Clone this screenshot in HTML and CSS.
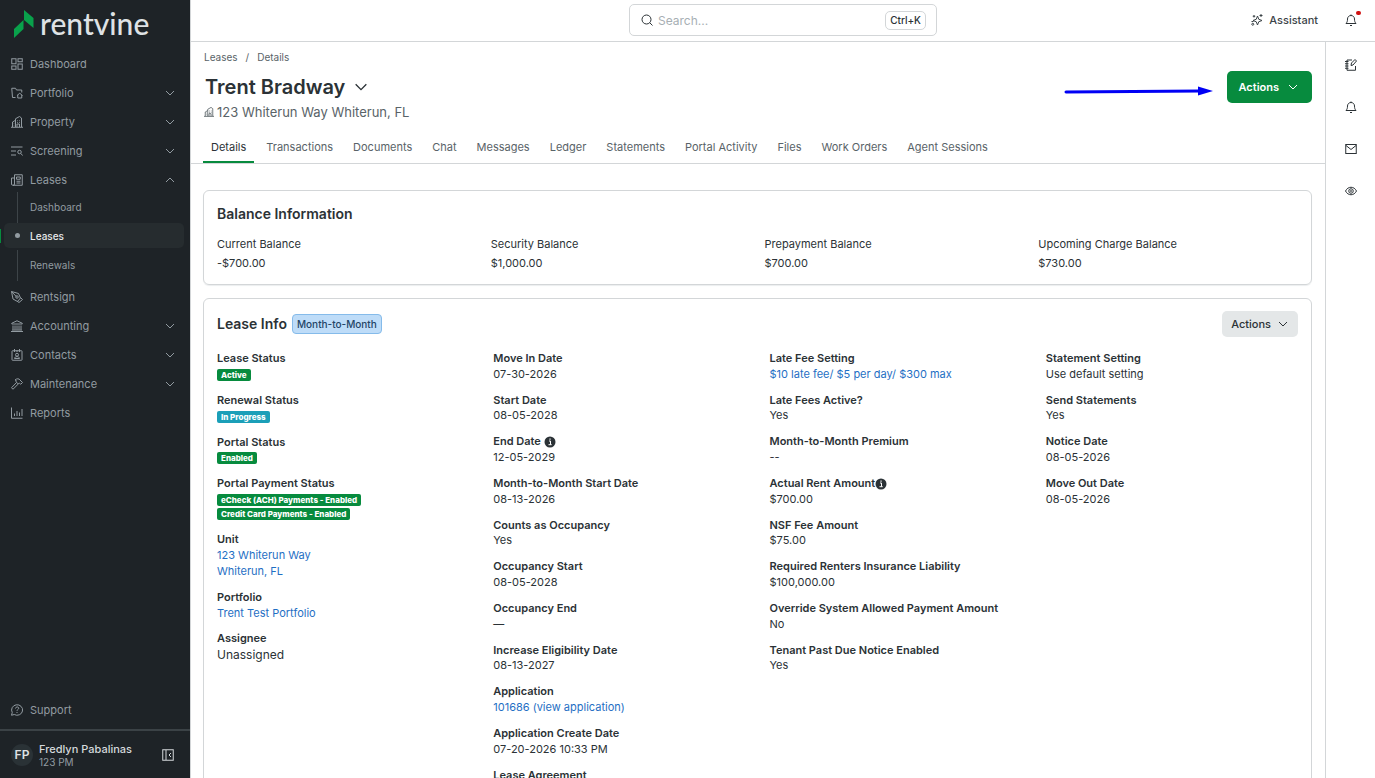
FILE: index.html
```html
<!DOCTYPE html>
<html lang="en">
<head>
<meta charset="utf-8">
<title>Trent Bradway - Lease Details</title>
<link rel="stylesheet" href="styles.css">
</head>
<body>
<svg class="sprite" aria-hidden="true">
  <symbol id="chev" viewBox="0 0 12 12"><path d="M2 4l4 4 4-4"/></symbol>
  <symbol id="building" viewBox="0 0 24 24"><path d="M0 22.500h24M3 22V12l6-3.500M9 22V5.500L17 1l4 3v18M12 22v-6h5v6M12 9.500h1.500M16.500 9.500h1.500M12 13h1.500M16.500 13h1.500M5.500 14.500h1M5.500 18.500h1"/></symbol>
  <symbol id="bell" viewBox="0 0 24 24"><path d="M12 1v2M12 3c-4 0-7 3-7 7 0 5-1 6.500-3 9h20c-2-2.500-3-4-3-9 0-4-3-7-7-7zM10 23h4"/></symbol>
</svg>
<div class="app">
  <aside class="sidebar">
    <a class="logo" href="#" aria-label="rentvine">
      <svg class="logo-mark" viewBox="0 0 20 28" aria-hidden="true"><path d="M10 0l9.500 8v10L10 10z"/><path d="M9.500 10v9L0 28v-9z"/></svg>
      <span>rentvine</span>
    </a>
    <nav class="nav">
      <a class="nav-item" href="#"><svg class="ico" viewBox="0 0 24 24"><rect x="1.500" y="1.500" width="8.500" height="10"/><rect x="14" y="1.500" width="8.500" height="6"/><rect x="1.500" y="16" width="8.500" height="6.500"/><rect x="14" y="12" width="8.500" height="10.500"/></svg><span>Dashboard</span></a>
      <button class="nav-item" type="button"><svg class="ico" viewBox="0 0 24 24"><path d="M9 21H3L1.500 2.500H9l2 3.500h10.500v5M12 17l5.500-4.500L23 17M13.500 16v6h8v-6"/></svg><span>Portfolio</span><svg class="chev"><use href="#chev"/></svg></button>
      <button class="nav-item" type="button"><svg class="ico"><use href="#building"/></svg><span>Property</span><svg class="chev"><use href="#chev"/></svg></button>
      <button class="nav-item" type="button"><svg class="ico" viewBox="0 0 24 24"><path d="M0 4h23M0 12h10M0 20h10"/><circle cx="17" cy="14" r="3.500"/><path d="M20 17l3 4"/></svg><span>Screening</span><svg class="chev"><use href="#chev"/></svg></button>
      <button class="nav-item" type="button" aria-expanded="true"><svg class="ico" viewBox="0 0 24 24"><path d="M7 1.500h15.500v21H3.500a2.500 2.500 0 0 1-2.500-2.500V8h5M7 1.500V20a2.500 2.500 0 0 1-3 2.500M11 6h7.500v4.500H11zM11 14.500h8M11 18h8"/></svg><span>Leases</span><svg class="chev up"><use href="#chev"/></svg></button>
      <div class="subnav">
        <a href="#"><i class="guide"></i>Dashboard</a>
        <a class="current" href="#" aria-current="page"><i class="dot"></i>Leases</a>
        <a href="#"><i class="guide"></i>Renewals</a>
      </div>
      <a class="nav-item" href="#"><svg class="ico" viewBox="0 0 24 24"><path d="M1 1l14 4 4 9-6 7-9-5zM1 1l9.500 10M19 13l4 4-7 6-4-3"/><circle cx="12" cy="12" r="2.500"/></svg><span>Rentsign</span></a>
      <button class="nav-item" type="button"><svg class="ico" viewBox="0 0 24 24"><path d="M1.500 8v-1.500L12 1.500l10.500 5V8zM4 11v8M8 11v8M12 11v8M16 11v8M20 11v8M2 20h20M0 23h24"/></svg><span>Accounting</span><svg class="chev"><use href="#chev"/></svg></button>
      <button class="nav-item" type="button"><svg class="ico" viewBox="0 0 24 24"><rect x="2" y="3.500" width="20" height="19" rx="1"/><path d="M7 0v6M12 2v4M17 0v6M7 19c0-5 10-5 10 0z"/><circle cx="12" cy="11.500" r="3"/></svg><span>Contacts</span><svg class="chev"><use href="#chev"/></svg></button>
      <button class="nav-item" type="button"><svg class="ico" viewBox="0 0 24 24"><path d="M11 9L1 19.500l3 3L14.500 12M8 4c4-3.500 8-3 10 0l5 5-3.500 3.500-3-2.500-2 2-4.500-4.500 1-2z"/></svg><span>Maintenance</span><svg class="chev"><use href="#chev"/></svg></button>
      <a class="nav-item" href="#"><svg class="ico" viewBox="0 0 24 24"><path d="M1 1v21.500h22M7 18v-5M12 18V8M17 18v-7M22 18V4"/></svg><span>Reports</span></a>
    </nav>
    <a class="nav-item support" href="#"><svg class="ico" viewBox="0 0 24 24"><path d="M1 22.500l1.500-5.500a11 10.500 0 1 1 4 4zM9 9c0-4 6.500-4 6.500-.5 0 2.500-3.500 2.500-3.500 5M12 16v2"/></svg><span>Support</span></a>
    <div class="user">
      <span class="avatar">FP</span>
      <div class="who"><strong>Fredlyn Pabalinas</strong><span>123 PM</span></div>
      <button class="icon-btn" type="button" aria-label="Collapse sidebar"><svg class="ico" viewBox="0 0 24 24"><rect x="1.500" y="1.500" width="21" height="21"/><path d="M8 2v20M18 8l-4 4 4 4"/></svg></button>
    </div>
  </aside>

  <div class="page">
    <header class="topbar">
      <label class="search">
        <svg class="ico" viewBox="0 0 24 24"><circle cx="11" cy="11" r="9"/><path d="M17.500 17.500L23 23"/></svg>
        <input type="text" placeholder="Search..." aria-label="Search">
        <kbd>Ctrl+K</kbd>
      </label>
      <div class="top-actions">
        <button class="assistant" type="button"><svg class="ico" viewBox="0 0 24 24"><path d="M13 4l2.500 6.500L22 13l-6.500 2.500L13 22l-2.500-6.500L4 13l6.500-2.500zM6 2v5M3.500 4.500h5M20 0v6M17 3h6M1 15h4"/><circle cx="3.500" cy="20.500" r="2"/></svg>Assistant</button>
        <button class="icon-btn notify" type="button" aria-label="Notifications"><svg class="ico"><use href="#bell"/></svg><i></i></button>
      </div>
    </header>

    <div class="body">
      <main class="main">
        <div class="head">
          <nav class="crumbs" aria-label="Breadcrumb"><a href="#">Leases</a><span>/</span><a href="#">Details</a></nav>
          <div class="head-row">
            <div class="title-block">
              <div class="title"><h1>Trent Bradway</h1><button class="icon-btn" type="button" aria-label="Switch lease"><svg class="title-chev"><use href="#chev"/></svg></button></div>
              <p class="address"><svg class="ico"><use href="#building"/></svg>123 Whiterun Way Whiterun, FL</p>
            </div>
            <div class="head-actions">
              <svg class="arrow" viewBox="0 0 150 12" aria-hidden="true"><path class="line" d="M2 7l134-1"/><path class="tip" d="M134 1.500l15 4.500-15 4.500z"/></svg>
              <button class="primary" type="button">Actions<svg class="chev"><use href="#chev"/></svg></button>
            </div>
          </div>
          <nav class="tabs">
            <a class="active" href="#">Details</a><a href="#">Transactions</a><a href="#">Documents</a><a href="#">Chat</a><a href="#">Messages</a><a href="#">Ledger</a><a href="#">Statements</a><a href="#">Portal Activity</a><a href="#">Files</a><a href="#">Work Orders</a><a href="#">Agent Sessions</a>
          </nav>
        </div>

        <div class="content">
          <section class="card balance">
            <h2>Balance Information</h2>
            <dl class="balances">
              <div><dt>Current Balance</dt><dd>-$700.00</dd></div>
              <div><dt>Security Balance</dt><dd>$1,000.00</dd></div>
              <div><dt>Prepayment Balance</dt><dd>$700.00</dd></div>
              <div><dt>Upcoming Charge Balance</dt><dd>$730.00</dd></div>
            </dl>
          </section>

          <section class="card lease">
            <div class="card-head">
              <h2>Lease Info</h2><span class="pill">Month-to-Month</span>
              <button class="secondary" type="button">Actions<svg class="chev"><use href="#chev"/></svg></button>
            </div>
            <div class="info">
              <dl>
                <div><dt>Lease Status</dt><dd><span class="badge">Active</span></dd></div>
                <div><dt>Renewal Status</dt><dd><span class="badge teal">In Progress</span></dd></div>
                <div><dt>Portal Status</dt><dd><span class="badge">Enabled</span></dd></div>
                <div><dt>Portal Payment Status</dt><dd><span class="badge">eCheck (ACH) Payments - Enabled</span></dd><dd><span class="badge">Credit Card Payments - Enabled</span></dd></div>
                <div><dt>Unit</dt><dd><a href="#">123 Whiterun Way<br>Whiterun, FL</a></dd></div>
                <div><dt>Portfolio</dt><dd><a href="#">Trent Test Portfolio</a></dd></div>
                <div><dt>Assignee</dt><dd class="assignee">Unassigned</dd></div>
              </dl>
              <dl>
                <div><dt>Move In Date</dt><dd>07-30-2026</dd></div>
                <div><dt>Start Date</dt><dd>08-05-2028</dd></div>
                <div><dt>End Date <svg class="info-ico" viewBox="0 0 12 12"><circle cx="6" cy="6" r="5.500"/><path d="M5 5h1.500v3.500M4.500 8.700h3.200M5.300 3.100h1.500"/></svg></dt><dd>12-05-2029</dd></div>
                <div><dt>Month-to-Month Start Date</dt><dd>08-13-2026</dd></div>
                <div><dt>Counts as Occupancy</dt><dd>Yes</dd></div>
                <div><dt>Occupancy Start</dt><dd>08-05-2028</dd></div>
                <div><dt>Occupancy End</dt><dd>—</dd></div>
                <div><dt>Increase Eligibility Date</dt><dd>08-13-2027</dd></div>
                <div><dt>Application</dt><dd><a href="#">101686 (view application)</a></dd></div>
                <div><dt>Application Create Date</dt><dd>07-20-2026 10:33 PM</dd></div>
                <div><dt>Lease Agreement</dt></div>
              </dl>
              <dl>
                <div><dt>Late Fee Setting</dt><dd><a href="#">$10 late fee/ $5 per day/ $300 max</a></dd></div>
                <div><dt>Late Fees Active?</dt><dd>Yes</dd></div>
                <div><dt>Month-to-Month Premium</dt><dd>--</dd></div>
                <div><dt>Actual Rent Amount<svg class="info-ico" viewBox="0 0 12 12"><circle cx="6" cy="6" r="5.500"/><path d="M5 5h1.500v3.500M4.500 8.700h3.200M5.300 3.100h1.500"/></svg></dt><dd>$700.00</dd></div>
                <div><dt>NSF Fee Amount</dt><dd>$75.00</dd></div>
                <div><dt>Required Renters Insurance Liability</dt><dd>$100,000.00</dd></div>
                <div><dt>Override System Allowed Payment Amount</dt><dd>No</dd></div>
                <div><dt>Tenant Past Due Notice Enabled</dt><dd>Yes</dd></div>
              </dl>
              <dl>
                <div><dt>Statement Setting</dt><dd>Use default setting</dd></div>
                <div><dt>Send Statements</dt><dd>Yes</dd></div>
                <div><dt>Notice Date</dt><dd>08-05-2026</dd></div>
                <div><dt>Move Out Date</dt><dd>08-05-2026</dd></div>
              </dl>
            </div>
          </section>
        </div>
      </main>

      <aside class="rail">
        <button class="icon-btn" type="button" aria-label="Notes"><svg class="ico" viewBox="0 0 24 24"><path d="M14 2H4v20.500h17V14M0 5h7M0 9.500h7M0 14h7M0 18.500h7M12 13l1-5 7-7 3 3-7 8z"/></svg></button>
        <button class="icon-btn" type="button" aria-label="Alerts"><svg class="ico"><use href="#bell"/></svg></button>
        <button class="icon-btn" type="button" aria-label="Mail"><svg class="ico" viewBox="0 0 24 24"><rect x="1.500" y="3" width="21" height="18"/><path d="M2 5l10 8 10-8"/></svg></button>
        <button class="icon-btn" type="button" aria-label="Watch"><svg class="ico" viewBox="0 0 24 24"><path d="M1 12c5-10 17-10 22 0-5 10-17 10-22 0z"/><circle cx="12" cy="12" r="4.500"/><circle cx="12" cy="12" r="1"/></svg></button>
      </aside>
    </div>
  </div>
</div>
</body>
</html>
```
FILE: styles.css
```css
* { box-sizing: border-box; margin: 0; padding: 0; }

body {
  font-family: Inter, "Liberation Sans", sans-serif;
  font-size: 11px;
  color: #2b3236;
  background: #fff;
}

a { color: inherit; text-decoration: none; }
button { font: inherit; color: inherit; background: none; border: 0; cursor: pointer; }
svg { fill: none; stroke: currentColor; flex: none; }

.sprite { position: absolute; width: 0; height: 0; }
.ico { width: 12px; height: 12px; stroke-width: 2; }
.chev { width: 12px; height: 12px; stroke-width: 1; }
.chev.up { transform: rotate(180deg); }
.icon-btn { display: flex; align-items: center; justify-content: center; }

.app { display: flex; height: 100vh; overflow: hidden; }

/* Sidebar */
.sidebar {
  width: 190px;
  flex: none;
  display: flex;
  flex-direction: column;
  background: #1e2327;
  color: #929ba1;
}
.logo {
  display: flex;
  align-items: center;
  gap: 6px;
  height: 49px;
  padding: 0 0 1px 14px;
  color: #dfe2e5;
  font: 500 30px/26px Lato, sans-serif;
}
.logo span { padding-bottom: 2px; }
.logo-mark { width: 20px; height: 28px; fill: #09a14b; stroke: none; }
.nav { flex: 1; }
.nav-item {
  display: flex;
  align-items: center;
  gap: 7px;
  width: 100%;
  height: 29px;
  padding: 0 14px 0 11px;
  text-align: left;
}
.nav-item span { flex: 1; }
.subnav { margin-top: -2px; padding-bottom: 3px; font-size: 10px; }
.subnav a {
  position: relative;
  display: flex;
  align-items: center;
  height: 29px;
  margin: 0 6px 0 4px;
  padding-left: 26px;
}
.subnav a.current {
  height: 25px;
  margin-top: 2px;
  margin-bottom: 2px;
  border-radius: 5px;
  background: #262c2f;
  color: #e6e9eb;
  font-weight: 500;
}
.subnav a.current::before {
  content: "";
  position: absolute;
  left: -4px;
  top: 6px;
  width: 1px;
  height: 14px;
  background: #078b3e;
}
.guide { position: absolute; left: 13px; top: 0; width: 1px; height: 31px; background: #3d4448; }
.dot { position: absolute; left: 11px; top: 10px; width: 5px; height: 5px; border-radius: 50%; background: #929ba1; }
.support { margin-bottom: 5px; }
.user {
  display: flex;
  align-items: center;
  height: 49px;
  padding: 0 16px 0 11px;
  border-top: 2px solid #3b4246;
}
.avatar {
  width: 22px;
  height: 22px;
  border-radius: 50%;
  background: #2a3236;
  color: #dfe2e5;
  font-size: 12px;
  font-weight: 600;
  line-height: 22px;
  text-align: center;
}
.who { flex: 1; padding: 2px 0 0 6px; font-size: 10px; line-height: 13px; }
.who strong { display: block; color: #d5d9dc; font-size: 11px; font-weight: 500; }
.who span { display: block; }
.user .icon-btn { color: #d5d9dc; }

/* Top bar */
.page { flex: 1; min-width: 0; display: flex; flex-direction: column; border-left: 1px solid #d3d6d8; }
.topbar {
  display: grid;
  grid-template-columns: 1fr 308px 1fr;
  align-items: center;
  height: 42px;
  flex: none;
  padding-bottom: 1px;
  border-bottom: 1px solid #d3d6d8;
}
.search {
  grid-column: 2;
  display: flex;
  align-items: center;
  gap: 5px;
  height: 32px;
  padding: 0 10px 0 11px;
  border: 1px solid #d3d6d8;
  border-radius: 5px;
}
.search input { flex: 1; min-width: 0; border: 0; outline: 0; font: inherit; font-size: 12px; }
.search input::placeholder { color: #a7afb4; }
.search kbd {
  padding: 0 4px;
  border: 1px solid #d3d6d8;
  border-radius: 5px;
  font: 500 10px/17px Inter, sans-serif;
}
.top-actions { display: flex; justify-content: flex-end; gap: 27px; padding-right: 18px; }
.assistant { display: flex; align-items: center; gap: 6px; font-weight: 500; color: #3c4448; }
.notify { position: relative; }
.notify i { position: absolute; left: 11px; top: -2px; width: 5px; height: 4px; border-radius: 2px; background: #d01010; }

.body { flex: 1; min-height: 0; display: flex; }
.main { flex: 1; min-width: 0; overflow: hidden; }
.rail {
  width: 50px;
  flex: none;
  display: flex;
  flex-direction: column;
  align-items: center;
  gap: 30px;
  padding-top: 17px;
  border-left: 1px solid #d3d6d8;
}

/* Page heading */
.head { padding: 9px 12px 0; border-bottom: 1px solid #d3d6d8; }
.crumbs { display: flex; gap: 8px; padding-left: 1px; font-size: 10px; line-height: 12px; color: #596368; }
.head-row { display: flex; justify-content: space-between; align-items: flex-start; padding: 8px 1px 0; }
.title { display: flex; align-items: center; gap: 8px; padding-left: 1px; line-height: 32px; }
h1 { font-size: 20px; font-weight: 600; }
.title-chev { width: 16px; height: 16px; stroke-width: 1; }
.address { display: flex; align-items: center; gap: 3px; font-size: 13px; line-height: 18px; color: #596368; }
.address .ico { width: 10px; height: 10px; }
.head-actions { display: flex; align-items: center; gap: 13px; }
.arrow { width: 150px; height: 12px; color: #0000f5; margin-top: 7px; }
.arrow .line { stroke-width: 3; stroke-linecap: round; }
.arrow .tip { fill: currentColor; stroke: none; }
.primary {
  display: flex;
  align-items: center;
  gap: 8px;
  height: 32px;
  padding: 0 13px 0 12px;
  border-radius: 5px;
  background: #078b3e;
  color: #fff;
  font-weight: 600;
}
.tabs { display: flex; gap: 4px; padding-top: 9px; color: #596368; }
.tabs a { height: 33px; padding: 0 8px; line-height: 34px; border-bottom: 2px solid transparent; }
.tabs .active { color: #2b3236; border-color: #078b3e; }

/* Cards */
.content { display: grid; gap: 13px; padding: 26px 13px 0 12px; }
.card { border: 1px solid #d3d6d8; border-radius: 6px; padding: 12px 13px; }
.balance { padding-bottom: 11px; box-shadow: 0 1px 1px #eceeef; }
h2 { font-size: 14px; line-height: 22px; font-weight: 600; }
.balances { display: grid; grid-template-columns: repeat(4, 1fr); gap: 14px; padding-top: 10px; line-height: 19px; }
.card-head { display: flex; align-items: center; gap: 5px; height: 26px; }
.pill {
  padding: 0 4px;
  border: 1px solid #85bbea;
  border-radius: 4px;
  background: #bedcf8;
  color: #234466;
  font-size: 10px;
  font-weight: 500;
  line-height: 18px;
}
.secondary {
  display: flex;
  align-items: center;
  gap: 6px;
  height: 26px;
  margin-left: auto;
  padding: 0 9px;
  border-radius: 5px;
  background: #e4e7e8;
  font-weight: 500;
}
.info { display: grid; grid-template-columns: repeat(4, 1fr); gap: 24px; padding-top: 14px; line-height: 1.44; }
.info dl { display: flex; flex-direction: column; gap: 10px; }
.info dt { font-weight: 600; }
.info a { color: #1f6fc4; }
.badge {
  display: block;
  width: fit-content;
  margin: 2px 0;
  padding: 0 4px;
  border-radius: 2px;
  background: #078b3e;
  color: #fff;
  font-size: 8px;
  font-weight: 800;
  line-height: 12px;
}
.badge.teal { background: #1b9fb8; }
.assignee { font-size: 12px; line-height: 16px; }
.info-ico { width: 12px; height: 12px; margin: -2px 0; vertical-align: -1px; stroke: none; }
.info-ico circle { fill: #2b3236; }
.info-ico path { stroke: #fff; stroke-width: 1; }
```
